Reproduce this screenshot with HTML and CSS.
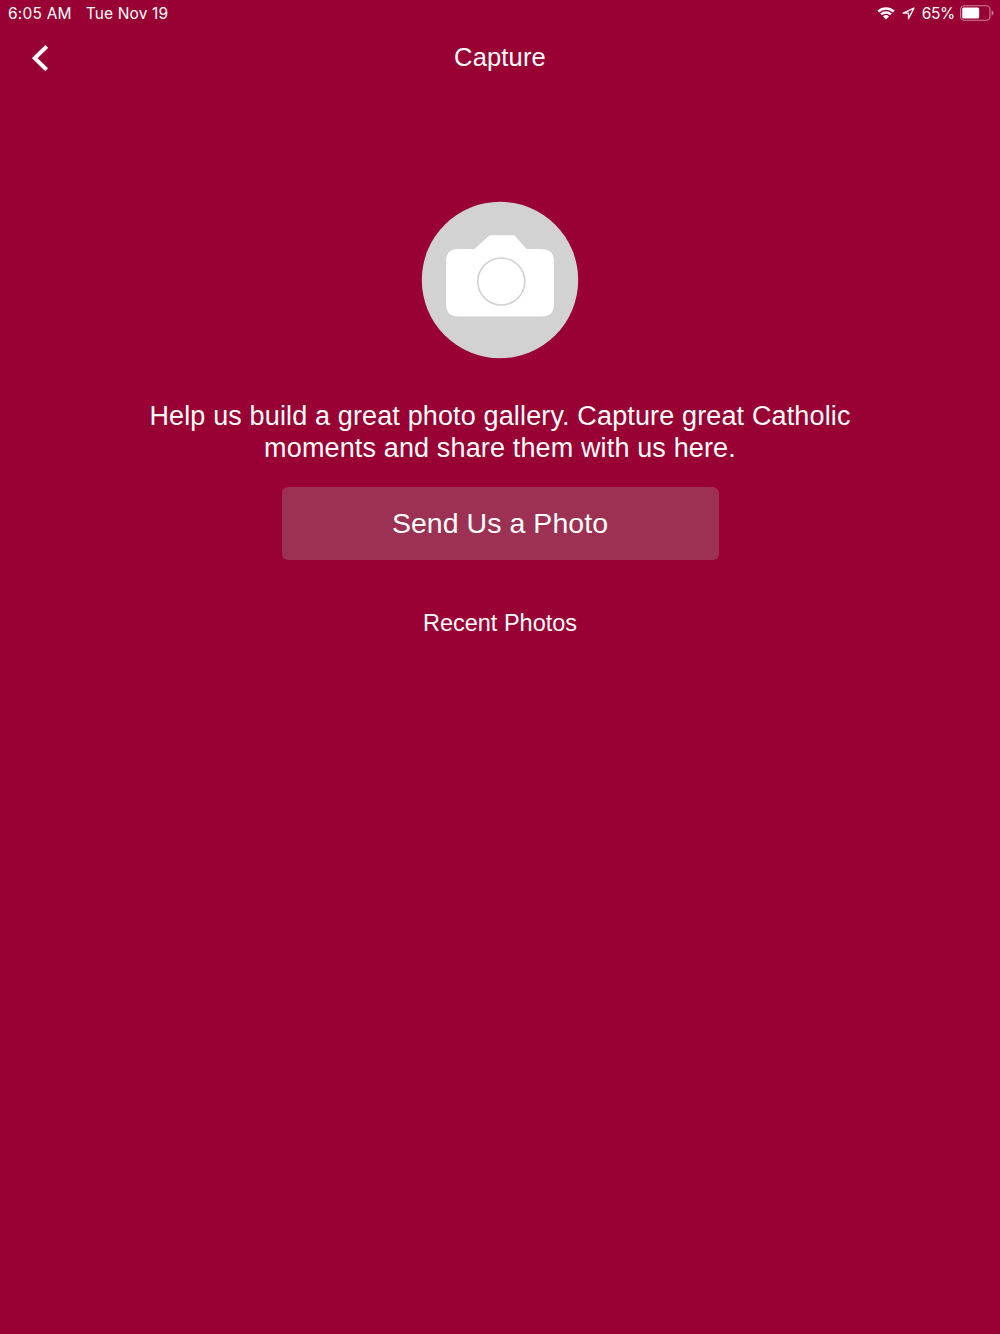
FILE: index.html
```html
<!DOCTYPE html>
<html lang="en">
<head>
    <meta charset="UTF-8">
    <meta name="viewport" content="width=device-width, initial-scale=1.0">
    <title>Capture</title>
    <link rel="stylesheet" href="styles.css">
</head>
<body>
    <div class="status-bar">
        <div class="status-left">
            <span class="time">6:05 AM</span>
            <span class="date">Tue Nov 19</span>
        </div>
        <div class="status-right">
            <svg class="wifi" width="18" height="14" viewBox="0 0 18 14">
                <path d="M0.4 4.6a12.4 12.4 0 0 1 17.2 0l-1.7 1.8a10 10 0 0 0-13.800 0z"/>
                <path d="M3.2 7.5a8.4 8.4 0 0 1 11.6 0l-1.7 1.8a6 6 0 0 0-8.2 0z"/>
                <path d="M6 10.4a4.4 4.4 0 0 1 6 0l-3 3.1z"/>
            </svg>
            <svg class="location" width="13" height="13" viewBox="0 0 13 13">
                <path d="M11.9 1.1 1.2 6.2h5.3v5.5z"/>
            </svg>
            <span class="percent">65%</span>
            <svg class="battery" width="34" height="16" viewBox="0 0 34 16">
                <rect class="outline" x="0.6" y="0.8" width="29.4" height="14.4" rx="3.8"/>
                <rect class="level" x="2.2" y="2.6" width="17" height="10.8" rx="1.5"/>
                <path class="cap" d="M31.6 5.6q2 .7 2 2.4t-2 2.4z"/>
            </svg>
        </div>
    </div>

    <header class="nav-bar">
        <button class="back" type="button" aria-label="Back">
            <svg width="16" height="28" viewBox="0 0 16 28">
                <path d="M14.7 2.5 2.8 14.1l11.9 11.600"/>
            </svg>
        </button>
        <h1>Capture</h1>
    </header>

    <main class="content">
        <svg class="camera" width="158" height="158" viewBox="0 0 158 158">
            <circle class="disc" cx="79" cy="79" r="78.2"/>
            <path class="body" d="M37 48h16.5L68.700 34.200h24.700L105.400 48H120.500q12.500 0 12.500 12.500v42.500q0 12.500-12.500 12.500H37.500q-12.500 0-12.500-12.500V60.500Q25 48 37 48z"/>
            <circle class="lens" cx="80.3" cy="80.5" r="23.5"/>
        </svg>
        <p class="intro">Help us build a great photo gallery. Capture great Catholic<br>moments and share them with us here.</p>
        <button class="send" type="button">Send Us a Photo</button>
        <h2>Recent Photos</h2>
    </main>
</body>
</html>
```

FILE: styles.css
```css
body {
    font-family: "Liberation Sans", Arial, sans-serif;
    background-color: #990033;
    color: #fff;
    margin: 0;
    min-height: 100vh;
}
.status-bar {
    display: flex;
    justify-content: space-between;
    height: 26px;
    padding: 0 6px 0 8px;
    font-family: Inter, sans-serif;
    font-size: 15.5px;
    line-height: 26px;
}
.status-left,
.status-right {
    display: flex;
    align-items: center;
}
.status-left {
    gap: 14px;
    padding-top: 1px;
}
.time {
    letter-spacing: 0.2px;
}
.date {
    letter-spacing: 0.15px;
}
.wifi {
    fill: #fff;
    margin-right: 7px;
}
.location {
    fill: none;
    stroke: #fff;
    stroke-width: 1.3;
    stroke-linejoin: round;
    margin-right: 7px;
}
.percent {
    margin-right: 5px;
    padding-top: 1px;
    letter-spacing: -0.3px;
}
.battery .outline {
    fill: none;
    stroke: #c98199;
    stroke-width: 1.1;
}
.battery .level {
    fill: #fff;
}
.battery .cap {
    fill: #c98199;
}
.nav-bar {
    display: grid;
    grid-template-columns: 100px 1fr 100px;
    align-items: center;
    height: 64px;
}
button {
    border: none;
    padding: 0;
    color: #fff;
    font-family: inherit;
}
.back {
    display: flex;
    padding-left: 32px;
    background: none;
}
.back path {
    fill: none;
    stroke: #fff;
    stroke-width: 4;
}
h1 {
    margin: 0 0 2px;
    text-align: center;
    font-size: 25.5px;
    font-weight: normal;
    letter-spacing: 0.15px;
}
.content {
    display: flex;
    flex-direction: column;
    align-items: center;
    padding-top: 111px;
}
.camera .disc {
    fill: #d2d2d2;
}
.camera .body {
    fill: #fff;
}
.camera .lens {
    fill: none;
    stroke: #d2d2d2;
    stroke-width: 1.6;
}
.intro {
    margin: 42px 0 0;
    text-align: center;
    font-size: 27px;
    line-height: 31.5px;
    letter-spacing: 0.14px;
}
.send {
    width: 437px;
    height: 73px;
    margin-top: 22.5px;
    border-radius: 6px;
    background-color: #9c3153;
    font-size: 28.5px;
    letter-spacing: 0.05px;
}
h2 {
    margin: 49.5px 0 0;
    font-size: 23.5px;
    font-weight: normal;
    line-height: 28px;
}
```
